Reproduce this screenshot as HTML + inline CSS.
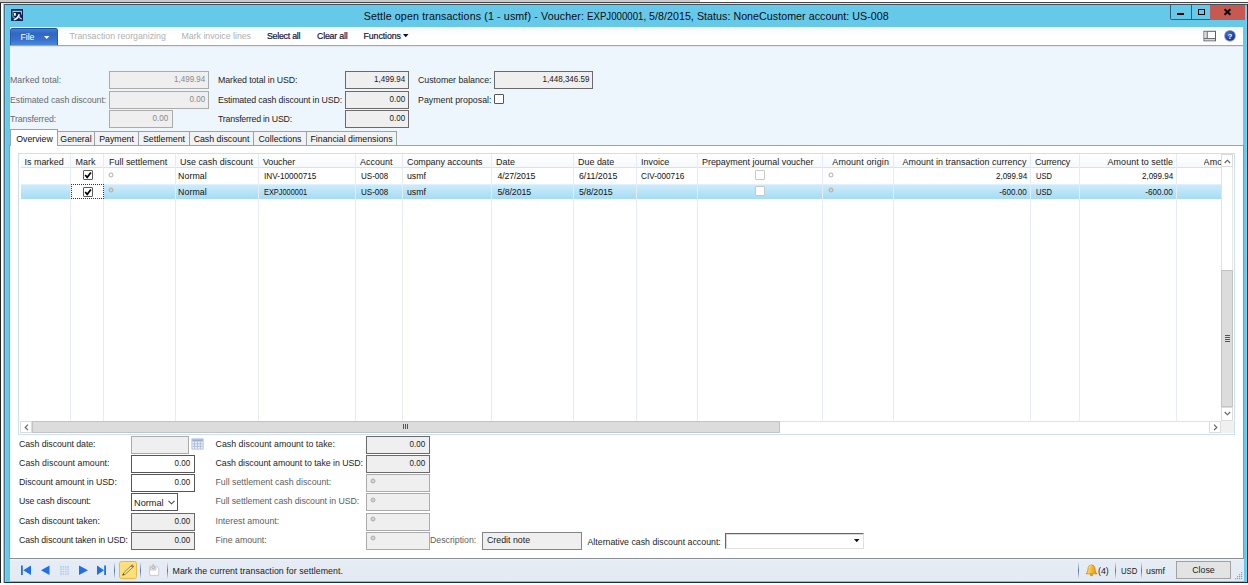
<!DOCTYPE html>
<html><head><meta charset="utf-8"><title>Settle open transactions</title>
<style>
*{box-sizing:border-box;margin:0;padding:0}
html,body{width:1248px;height:585px;overflow:hidden;background:#fff}
body{position:relative;font-family:"Liberation Sans",sans-serif;font-size:8.8px;color:#1a1a1a;line-height:1}
.a{position:absolute}
.t{position:absolute;white-space:nowrap;line-height:10px;height:10px}
.lbl{color:#1e1e1e}
.dis{color:#666b72}
.dis2{color:#5e5e5e}
.f{position:absolute;border:1px solid #6a6a6a;background:#efefef;height:18px;text-align:right;padding-right:3px;line-height:15px;white-space:nowrap}
.n{display:inline-block;transform:scaleX(.91);transform-origin:right center}
.f.l{border-color:#ababab;color:#8a8a8a}
.f.w{background:#fff;border-color:#555}
.tab{position:absolute;top:131px;height:14px;border:1px solid #9da1a8;border-bottom:none;background:#f1f2f4;line-height:14px;text-align:center;white-space:nowrap;color:#111}
.h{font-size:8.950px;position:absolute;top:154.5px;height:14px;line-height:14px;white-space:nowrap;color:#1a1a1a}
.c{position:absolute;white-space:nowrap;line-height:16px;height:16px;color:#111;margin-top:-0.5px}
.vs{position:absolute;top:154px;width:1px;height:266.500px;background:#e5ecf7}
.cb{position:absolute;width:10px;height:10px;border-radius:1px;border:1px solid #5a5a5a;background:#fff}
.dot{position:absolute;width:4.500px;height:4.500px;border-radius:50%;border:1px solid #a9a9a9;background:#d9d9d9}
.sep{position:absolute;top:562px;width:1.600px;margin-left:-0.300px;height:17px;background:linear-gradient(rgba(60,95,150,0),rgba(52,88,145,.8) 50%,rgba(60,95,150,0));border-radius:1px}
</style></head><body>
<!-- desktop scraps behind the window -->
<div class="a" style="left:0;top:0;width:700px;height:2px;background:#cbcbcb"></div>
<div class="a" style="left:0;top:2px;width:1248px;height:1px;background:#454545"></div>
<div class="a" style="left:1px;top:3px;width:1247px;height:1px;background:#e9e9e9"></div>
<div class="a" style="left:0;top:3px;width:1px;height:580px;background:#222"></div>
<div class="a" style="left:3px;top:4px;width:1px;height:579px;background:#c4c0c2"></div>
<!-- window frame -->
<div class="a" style="left:4px;top:4px;width:1244px;height:579px;background:#66c9ea;border-left:1px solid #3f7288;border-top:1px solid #3f5058;border-bottom:1px solid #12303c;border-right:1px solid #152830"></div>
<div class="a" style="left:5px;top:5px;width:1px;height:577px;background:#6fd6fa"></div>
<div class="a" style="left:1246px;top:5px;width:1px;height:577px;background:#6fd6fa"></div>
<!-- app icon -->
<svg class="a" style="left:11px;top:9px" width="12" height="12" viewBox="0 0 12 12"><rect width="12" height="12" fill="#0b2558"/><path d="M1.500 2.300h9.400" stroke="#fff" stroke-width="0.900"/><path d="M1.900 2.500v6M1.900 8.600h2" stroke="#9aa9c9" stroke-width="0.900" fill="none"/><path d="M10.500 2.500v3" stroke="#b4bfd8" stroke-width="0.900"/><rect x="3" y="4" width="1.800" height="2.700" fill="#fff"/><path d="M8.200 5.200C7.600 7.600 5.800 10 2.800 10.800" stroke="#fff" stroke-width="1.600" fill="none"/><path d="M7.500 7C8.200 8.300 9.300 9.600 10.700 10.200" stroke="#d3daea" stroke-width="1.300" fill="none"/></svg>
<div class="t" style="letter-spacing:0.117px;left:363.7px;top:9px;font-size:10.7px;line-height:14px;height:14px;color:#0c0c0c;white-space:pre">Settle open transactions (1 - usmf) - Voucher: </div>
<div class="t" style="transform:scaleX(0.904);transform-origin:left;left:587.2px;top:9px;font-size:10.7px;line-height:14px;height:14px;color:#0c0c0c;white-space:pre">EXPJ000001, </div>
<div class="t" style="letter-spacing:0.034px;left:649.0px;top:9px;font-size:10.7px;line-height:14px;height:14px;color:#0c0c0c;white-space:pre">5/8/2015, Status: NoneCustomer account: US-008</div>
<!-- window buttons -->
<div class="a" style="left:1170px;top:5px;width:22px;height:15.400px;border:1px solid #2f6274;border-top:none;border-radius:0 0 0 2px"></div>
<div class="a" style="left:1191px;top:5px;width:20px;height:15.400px;border:1px solid #2f6274;border-top:none"></div>
<div class="a" style="left:1210px;top:5px;width:34.800px;height:15px;background:#c75a50"></div>
<div class="a" style="left:1177px;top:13px;width:7px;height:2px;background:#000"></div>
<div class="a" style="left:1197.700px;top:9.300px;width:7.300px;height:5.700px;border:1.600px solid #000;border-top-width:1.900px"></div>
<svg class="a" style="left:1223.300px;top:8.300px" width="9" height="8" viewBox="0 0 9 8"><path d="M1.600 1.200l5.800 5.600M7.400 1.200L1.600 6.800" stroke="#000" stroke-width="1.900"/></svg>

<!-- toolbar -->
<div class="a" style="left:9.500px;top:27px;width:1233.500px;height:19px;background:linear-gradient(#f3f7fc,#fff 45%,#fff);border-bottom:1px solid #a3a6aa"></div>
<div class="a" style="left:9.500px;top:28px;width:48.500px;height:17px;background:linear-gradient(#3f7ed8 0,#3067c2 30%,#3871cb 65%,#4988de 100%);border-radius:2.500px 2.500px 0 0;border:1px solid #2b59ad;border-top-color:#264e9e;border-bottom:none"></div>
<div class="t" style="letter-spacing:-0.097px;left:20.600px;top:32px;color:#fff">File</div>
<svg class="a" style="left:43.500px;top:35.500px" width="6" height="4"><path d="M0 0h5.400l-2.700 3z" fill="#fff"/></svg>
<div class="t" style="letter-spacing:-0.008px;left:69.5px;top:31px;color:#b0b0b0">Transaction reorganizing</div>
<div class="t" style="letter-spacing:-0.023px;left:181.5px;top:31px;color:#b0b0b0">Mark invoice lines</div>
<div class="t" style="letter-spacing:-0.250px;left:267px;top:31px;color:#15153a;-webkit-text-stroke:0.2px #15153a">Select all</div>
<div class="t" style="letter-spacing:-0.198px;left:317px;top:31px;color:#15153a;-webkit-text-stroke:0.2px #15153a">Clear all</div>
<div class="t" style="letter-spacing:-0.093px;left:363.5px;top:31px;color:#15153a;-webkit-text-stroke:0.2px #15153a">Functions</div>
<svg class="a" style="left:403px;top:34px" width="6" height="4"><path d="M0 0h5.5l-2.75 3.3z" fill="#111"/></svg>
<!-- toolbar right icons -->
<svg class="a" style="left:1203px;top:30px" width="14" height="12" viewBox="0 0 14 12"><rect x="1" y="1.300" width="11.500" height="9.500" fill="#fff" stroke="#5b5f63" stroke-width="1"/><rect x="1.500" y="1.800" width="2.500" height="6.500" fill="#d9dcdf"/><path d="M4.300 1.500v7M1 8.500h11.500" stroke="#5b5f63" stroke-width="0.900"/><rect x="1.500" y="9" width="10.500" height="1.200" fill="#d5d8db"/></svg>
<svg class="a" style="left:1223px;top:29px" width="14" height="14" viewBox="0 0 14 14"><defs><radialGradient id="hg" cx="0.35" cy="0.3" r="0.8"><stop offset="0" stop-color="#3f6fe0"/><stop offset="1" stop-color="#0b2a9a"/></radialGradient></defs><circle cx="7" cy="6.800" r="5.900" fill="#9a9da3"/><circle cx="7" cy="6.800" r="4.900" fill="url(#hg)"/><text x="7" y="9.700" font-size="8" font-weight="bold" text-anchor="middle" fill="#fff" font-family="Liberation Sans, sans-serif">?</text></svg>

<!-- content background -->
<div class="a" style="left:9.500px;top:46px;width:1233.500px;height:100px;background:linear-gradient(#d9dde3,#eef6fd 1.500px,#eef6fd)"></div>

<!-- top fields -->
<div class="t dis" style="letter-spacing:0.034px;left:10px;top:75px">Marked total:</div>
<div class="t dis" style="letter-spacing:-0.067px;left:10px;top:95px">Estimated cash discount:</div>
<div class="t dis" style="letter-spacing:-0.133px;left:10px;top:114px">Transferred:</div>
<div class="f l" style="left:109px;top:71px;width:100px"><span class="n">1,499.94</span></div>
<div class="f l" style="left:109px;top:91px;width:100px"><span class="n">0.00</span></div>
<div class="f l" style="left:109px;top:110px;width:64px;padding-right:4px"><span class="n">0.00</span></div>
<div class="t lbl" style="letter-spacing:-0.084px;left:218px;top:75px">Marked total in USD:</div>
<div class="t lbl" style="letter-spacing:-0.133px;left:218px;top:95px">Estimated cash discount in USD:</div>
<div class="t lbl" style="letter-spacing:-0.206px;left:218px;top:114px">Transferred in USD:</div>
<div class="f" style="left:345px;top:71px;width:64px"><span class="n">1,499.94</span></div>
<div class="f" style="left:345px;top:91px;width:64px"><span class="n">0.00</span></div>
<div class="f" style="left:345px;top:110px;width:64px"><span class="n">0.00</span></div>
<div class="t lbl" style="letter-spacing:-0.020px;left:418px;top:75px">Customer balance:</div>
<div class="f" style="left:494px;top:71px;width:99px"><span class="n">1,448,346.59</span></div>
<div class="t lbl" style="letter-spacing:0.008px;left:418px;top:95px">Payment proposal:</div>
<div class="cb" style="left:494px;top:94px;border-color:#555"></div>

<!-- tabs -->
<div class="a" style="left:9px;top:145px;width:1235px;height:414px;background:#fff;border:1px solid #9da1a8;border-left-color:#6ba8c4;border-right-color:#6fa0b8;border-bottom:none"></div>
<div class="tab" style="left:57px;width:38px">General</div>
<div class="tab" style="left:94px;width:45px">Payment</div>
<div class="tab" style="left:138px;width:52px">Settlement</div>
<div class="tab" style="left:189px;width:65px">Cash discount</div>
<div class="tab" style="left:253px;width:54px">Collections</div>
<div class="tab" style="left:306px;width:91px">Financial dimensions</div>
<div class="tab" style="left:10px;top:129px;width:48px;height:17px;background:#fff;line-height:18px;padding-left:1px">Overview</div>

<!-- grid -->
<div class="a" style="left:18px;top:153px;width:1217px;height:281.500px;border:1px solid #cddff2;background:#fff"></div>
<div class="a" style="left:21px;top:154px;width:1200px;height:14px;background:linear-gradient(#fff,#f6f9fd);border-bottom:1px solid #d8e2ee"></div>
<div class="a" style="left:21px;top:183.500px;width:1200px;height:15.500px;background:linear-gradient(#cdebfa,#a5dcf5);border-top:1px solid #dff2fc"></div>
<div class="vs" style="left:70px"></div><div class="vs" style="left:103.200px"></div><div class="vs" style="left:175px"></div><div class="vs" style="left:258px"></div><div class="vs" style="left:355px"></div><div class="vs" style="left:402px"></div><div class="vs" style="left:491px"></div><div class="vs" style="left:573px"></div><div class="vs" style="left:636px"></div><div class="vs" style="left:697px"></div><div class="vs" style="left:822px"></div><div class="vs" style="left:893px"></div><div class="vs" style="left:1030px"></div><div class="vs" style="left:1079px"></div><div class="vs" style="left:1176px"></div>
<div class="h" style="left:24.5px">Is marked</div>
<div class="h" style="left:75.5px">Mark</div>
<div class="h" style="left:109px">Full settlement</div>
<div class="h" style="left:180px">Use cash discount</div>
<div class="h" style="letter-spacing:-0.114px;left:263px">Voucher</div>
<div class="h" style="letter-spacing:0.015px;left:360px">Account</div>
<div class="h" style="letter-spacing:-0.063px;left:407px">Company accounts</div>
<div class="h" style="left:496px">Date</div>
<div class="h" style="left:578px">Due date</div>
<div class="h" style="left:641px">Invoice</div>
<div class="h" style="letter-spacing:-0.015px;left:702px">Prepayment journal voucher</div>
<div class="h" style="letter-spacing:0.119px;right:359px">Amount origin</div>
<div class="h" style="letter-spacing:0.023px;right:221.5px">Amount in transaction currency</div>
<div class="h" style="letter-spacing:-0.133px;left:1035px">Currency</div>
<div class="h" style="letter-spacing:0.050px;right:75px">Amount to settle</div>
<div class="h" style="left:1203.500px;width:17px;overflow:hidden;letter-spacing:0.2px">Amount</div>
<!-- row 1 -->
<div class="cb" style="left:83px;top:170.200px"></div>
<svg class="a" style="left:84px;top:171.200px" width="8" height="8" viewBox="0 0 8 8"><path d="M1.200 4l2 2.300L6.900 1.500" stroke="#000" stroke-width="1.700" fill="none"/></svg>
<svg class="a" style="left:107.9px;top:171.5px" width="6" height="6" viewBox="0 0 6 6"><circle cx="3" cy="3" r="2" fill="#fff" stroke="#a6a6a6" stroke-width="0.900"/></svg>
<div class="c" style="letter-spacing:0.073px;left:178px;top:168px">Normal</div>
<div class="c" style="transform:scaleX(0.932);transform-origin:left;left:263.800px;top:168px">INV-10000715</div>
<div class="c" style="transform:scaleX(0.915);transform-origin:left;left:360.600px;top:168px">US-008</div>
<div class="c" style="letter-spacing:-0.020px;left:407px;top:168px">usmf</div>
<div class="c" style="letter-spacing:-0.160px;left:497.5px;top:168px">4/27/2015</div>
<div class="c" style="letter-spacing:-0.020px;left:579px;top:168px">6/11/2015</div>
<div class="c" style="transform:scaleX(0.932);transform-origin:left;left:641px;top:168px">CIV-000716</div>
<div class="cb" style="left:755px;top:170px;border-color:#c8c8c8"></div>
<svg class="a" style="left:827.5px;top:171.5px" width="6" height="6" viewBox="0 0 6 6"><circle cx="3" cy="3" r="2" fill="#fff" stroke="#a6a6a6" stroke-width="0.900"/></svg>
<div class="c" style="transform:scaleX(0.914);transform-origin:right;right:221px;top:168px">2,099.94</div>
<div class="c" style="transform:scaleX(0.861);transform-origin:left;left:1036px;top:168px">USD</div>
<div class="c" style="transform:scaleX(0.914);transform-origin:right;right:75px;top:168px">2,099.94</div>
<!-- row 2 -->
<div class="a" style="left:71px;top:184px;width:33px;height:15px;background:#fff;border:1px dotted #333"></div>
<div class="cb" style="left:83px;top:186.600px"></div>
<svg class="a" style="left:84px;top:187.600px" width="8" height="8" viewBox="0 0 8 8"><path d="M1.200 4l2 2.300L6.900 1.500" stroke="#000" stroke-width="1.700" fill="none"/></svg>
<svg class="a" style="left:107.9px;top:187.1px" width="6" height="6" viewBox="0 0 6 6"><circle cx="3" cy="3" r="2" fill="#d4d4d4" stroke="#a6a6a6" stroke-width="0.900"/></svg>
<div class="c" style="letter-spacing:0.073px;left:178px;top:184px">Normal</div>
<div class="c" style="transform:scaleX(0.841);transform-origin:left;left:263.800px;top:184px">EXPJ000001</div>
<div class="c" style="transform:scaleX(0.915);transform-origin:left;left:360.600px;top:184px">US-008</div>
<div class="c" style="letter-spacing:-0.020px;left:407px;top:184px">usmf</div>
<div class="c" style="letter-spacing:-0.081px;left:497.5px;top:184px">5/8/2015</div>
<div class="c" style="letter-spacing:-0.081px;left:579px;top:184px">5/8/2015</div>
<div class="cb" style="left:755px;top:186px;border-color:#c8c8c8"></div>
<svg class="a" style="left:827.5px;top:187.1px" width="6" height="6" viewBox="0 0 6 6"><circle cx="3" cy="3" r="2" fill="#d4d4d4" stroke="#a6a6a6" stroke-width="0.900"/></svg>
<div class="c" style="transform:scaleX(0.921);transform-origin:right;right:221px;top:184px">-600.00</div>
<div class="c" style="transform:scaleX(0.861);transform-origin:left;left:1036px;top:184px">USD</div>
<div class="c" style="transform:scaleX(0.921);transform-origin:right;right:75px;top:184px">-600.00</div>
<!-- vertical scrollbar -->
<div class="a" style="left:1220.500px;top:154px;width:12.500px;height:267px;background:#fff;border-left:1px solid #e3e3e3;border-right:1px solid #e6e6e6"></div>
<div class="a" style="left:1220.500px;top:154px;width:12.500px;height:13px;border:1px solid #dcdcdc;background:#fff"></div>
<svg class="a" style="left:1223.600px;top:158.600px" width="7" height="5"><path d="M0.700 4l2.700-2.800 2.700 2.800" stroke="#5a5a5a" stroke-width="1.100" fill="none"/></svg>
<div class="a" style="left:1220.500px;top:270px;width:12.500px;height:137px;background:#dcdcdc;border:1px solid #c3c3c3"></div>
<div class="a" style="left:1225px;top:335px;width:5px;height:1px;background:#555;box-shadow:0 2px #555,0 4px #555,0 6px #555"></div>
<div class="a" style="left:1220.500px;top:407px;width:12.500px;height:13.500px;border:1px solid #dcdcdc;background:#fff"></div>
<svg class="a" style="left:1223.600px;top:411px" width="7" height="5"><path d="M0.700 1l2.700 2.800 2.700-2.800" stroke="#5a5a5a" stroke-width="1.100" fill="none"/></svg>
<!-- horizontal scrollbar -->
<div class="a" style="left:20px;top:420.500px;width:1213px;height:12px;background:#fff;border-top:1px solid #e3e3e3"></div>
<div class="a" style="left:20px;top:420.500px;width:12px;height:12px;border:1px solid #dcdcdc;background:#fff"></div>
<svg class="a" style="left:24px;top:423.500px" width="5" height="7"><path d="M4 0.700l-2.800 2.700 2.800 2.700" stroke="#5a5a5a" stroke-width="1.100" fill="none"/></svg>
<div class="a" style="left:32px;top:420.500px;width:748px;height:12px;background:#dcdcdc;border:1px solid #c3c3c3"></div>
<div class="a" style="left:403px;top:424px;width:1px;height:5px;background:#555;box-shadow:2px 0 #555,4px 0 #555"></div>
<div class="a" style="left:1209px;top:420.500px;width:12px;height:12px;border:1px solid #dcdcdc;background:#fff"></div>
<svg class="a" style="left:1213px;top:423.500px" width="5" height="7"><path d="M1 0.700l2.800 2.700-2.800 2.700" stroke="#5a5a5a" stroke-width="1.100" fill="none"/></svg>
<div class="a" style="left:1221px;top:420.500px;width:12.500px;height:12.500px;background:#f0f0f0"></div>

<!-- bottom fields col 1 -->
<div class="t lbl" style="letter-spacing:-0.067px;left:19px;top:439.3px">Cash discount date:</div>
<div class="t lbl" style="letter-spacing:0.025px;left:19px;top:458.3px">Cash discount amount:</div>
<div class="t lbl" style="letter-spacing:-0.042px;left:19px;top:477.3px">Discount amount in USD:</div>
<div class="t lbl" style="letter-spacing:-0.140px;left:19px;top:496.3px">Use cash discount:</div>
<div class="t lbl" style="letter-spacing:-0.068px;left:19px;top:516.3px">Cash discount taken:</div>
<div class="t lbl" style="letter-spacing:-0.136px;left:19px;top:535.3px">Cash discount taken in USD:</div>
<div class="f l" style="left:131px;top:436px;width:58px"></div>
<svg class="a" style="left:191px;top:438px" width="13" height="12" viewBox="0 0 13 12"><rect x="0.900" y="0.900" width="11.200" height="10.200" fill="#eef2fa" stroke="#a3b3d8" stroke-width="0.800"/><rect x="1.300" y="1.300" width="10.400" height="2.200" fill="#9aaedb"/><path d="M3.600 3.500v7.400M6.500 3.500v7.400M9.400 3.500v7.400M1.300 5.800h10.400M1.300 8.300h10.400" stroke="#a9b9df" stroke-width="0.900"/></svg>
<div class="f w" style="left:131px;top:455px;width:64px;padding-right:4.300px"><span class="n">0.00</span></div>
<div class="f w" style="left:131px;top:474px;width:64px;padding-right:4.300px"><span class="n">0.00</span></div>
<div class="f w" style="left:131px;top:493px;width:47px;text-align:left;padding-left:2px;font-size:9.2px;letter-spacing:0;line-height:19px">Normal</div>
<svg class="a" style="left:168px;top:500px" width="7" height="5"><path d="M0.500 0.800l3 3 3-3" stroke="#444" stroke-width="1.050" fill="none"/></svg>
<div class="f" style="left:131px;top:513px;width:64px;padding-right:4.300px"><span class="n">0.00</span></div>
<div class="f" style="left:131px;top:532px;width:64px;padding-right:4.300px"><span class="n">0.00</span></div>
<!-- bottom fields col 2 -->
<div class="t lbl" style="letter-spacing:0.023px;left:215.5px;top:439.3px">Cash discount amount to take:</div>
<div class="t lbl" style="letter-spacing:-0.046px;left:215.5px;top:458.3px">Cash discount amount to take in USD:</div>
<div class="t dis2" style="letter-spacing:-0.006px;left:215.5px;top:477.3px">Full settlement cash discount:</div>
<div class="t dis2" style="letter-spacing:-0.068px;left:215.5px;top:496.3px">Full settlement cash discount in USD:</div>
<div class="t dis2" style="letter-spacing:0.008px;left:215.5px;top:516.3px">Interest amount:</div>
<div class="t dis2" style="letter-spacing:-0.012px;left:215.5px;top:535.3px">Fine amount:</div>
<div class="f" style="left:366px;top:436px;width:64px;padding-right:3.700px"><span class="n">0.00</span></div>
<div class="f" style="left:366px;top:455px;width:64px;padding-right:3.700px"><span class="n">0.00</span></div>
<div class="f l" style="left:366px;top:474px;width:64px"></div><svg class="a" style="left:369.5px;top:477.5px" width="6" height="6" viewBox="0 0 6 6"><circle cx="3" cy="3" r="2" fill="#d4d4d4" stroke="#a6a6a6" stroke-width="0.900"/></svg>
<div class="f l" style="left:366px;top:493px;width:64px"></div><svg class="a" style="left:369.5px;top:496.5px" width="6" height="6" viewBox="0 0 6 6"><circle cx="3" cy="3" r="2" fill="#d4d4d4" stroke="#a6a6a6" stroke-width="0.900"/></svg>
<div class="f l" style="left:366px;top:513px;width:64px"></div><svg class="a" style="left:369.5px;top:515.5px" width="6" height="6" viewBox="0 0 6 6"><circle cx="3" cy="3" r="2" fill="#d4d4d4" stroke="#a6a6a6" stroke-width="0.900"/></svg>
<div class="f l" style="left:366px;top:532px;width:64px"></div><svg class="a" style="left:369.5px;top:534.5px" width="6" height="6" viewBox="0 0 6 6"><circle cx="3" cy="3" r="2" fill="#d4d4d4" stroke="#a6a6a6" stroke-width="0.900"/></svg>
<div class="t dis2" style="letter-spacing:-0.021px;left:430px;top:535.3px">Description:</div>
<div class="f" style="left:482px;top:532px;width:100px;text-align:left;padding-left:4px;letter-spacing:0;border-color:#858585">Credit note</div>
<div class="t lbl" style="letter-spacing:-0.006px;left:587.5px;top:536.5px">Alternative cash discount account:</div>
<div class="a" style="left:725px;top:533px;width:139px;height:16px;background:#fff;border-top:1px solid #666;border-left:1px solid #666;border-right:1px solid #e1e1e1;border-bottom:1px solid #e1e1e1;box-shadow:inset 1px 1px 0 #d9d9d9"></div>
<svg class="a" style="left:854px;top:539px" width="6" height="4"><path d="M0 0h5.5l-2.75 3.3z" fill="#111"/></svg>

<!-- status bar -->
<div class="a" style="left:9.500px;top:558px;width:1234px;height:23px;background:linear-gradient(#f2f5f9,#e6ecf4 2px,#e3eaf3);border-top:1px solid #8a8f96"></div>
<svg class="a" style="left:20px;top:565px" width="90" height="11" viewBox="0 0 90 11">
<g fill="#1e6df2"><rect x="1" y="0.5" width="1.8" height="9.5"/><path d="M11 0.5v9.5L3.3 5.25z"/><path d="M29.5 0.5v9.5L21 5.25z"/><path d="M59 0.5v9.5L68 5.25z"/><path d="M77 0.5v9.5L84 5.25z"/><rect x="84.2" y="0.5" width="1.8" height="9.5"/></g>
<g fill="#b7cdf3"><rect x="40" y="1" width="9" height="9"/></g><path d="M40 3.2h9M40 5.5h9M40 7.8h9M42.3 1v9M44.6 1v9M46.9 1v9" stroke="#e4ebf3" stroke-width="0.8"/>
</svg>
<div class="sep" style="left:114px"></div>
<div class="a" style="left:119px;top:561px;width:18px;height:18px;background:#ffe07c;border:1px solid #efb640;border-radius:2.500px"></div>
<svg class="a" style="left:121px;top:563px" width="14" height="14" viewBox="0 0 14 14"><path d="M1.600 12.300l1.300-2.700 7.600-7.200 1.600 1.600-7.700 7.200z" fill="#fbe88a" stroke="#6b5a2a" stroke-width="0.700"/><path d="M10.300 2.600l.9-.8 1.600 1.600-.9.800z" fill="#e0607a" stroke="#8a4a55" stroke-width="0.500"/><path d="M9.700 3.200l.6-.6 1.600 1.600-.6.600z" fill="#5aa77a"/><path d="M1.600 12.300l.9-1.900 1.100 1.100z" fill="#3a3226"/></svg>
<div class="sep" style="left:140px"></div>
<svg class="a" style="left:149px;top:564px" width="11" height="12" viewBox="0 0 11 12"><path d="M0.700 2.300h7l2 2v7H0.700z" fill="#fff" stroke="#c6c6c6" stroke-width="0.900"/><path d="M1.500 2.500v3.500h5.500v-3.500" fill="#ececec" stroke="#c0c0c0" stroke-width="0.800"/><circle cx="4.300" cy="3.300" r="1.500" fill="#dcdcdc" stroke="#a5a5a5" stroke-width="0.800"/><path d="M3.200 1.200a1.200 1.200 0 0 1 2.200 0" stroke="#b5b5b5" stroke-width="0.700" fill="none"/></svg>
<div class="sep" style="left:167px"></div>
<div class="t" style="letter-spacing:0.064px;left:172.5px;top:566px;color:#1a1a1a">Mark the current transaction for settlement.</div>
<div class="sep" style="left:1078px"></div>
<svg class="a" style="left:1085px;top:564px" width="13" height="13" viewBox="0 0 13 13"><defs><linearGradient id="bg" x1="0" x2="1"><stop offset="0" stop-color="#ffe58a"/><stop offset="0.45" stop-color="#f8bd2e"/><stop offset="1" stop-color="#e89412"/></linearGradient></defs><path d="M6.5 1c-2.4 0-3.6 2-3.6 4.2 0 2.4-.8 3.6-1.9 4.6h11c-1.1-1-1.9-2.2-1.9-4.6C10.100 3 8.900 1 6.500 1z" fill="url(#bg)" stroke="#b8801a" stroke-width="0.7"/><ellipse cx="6.500" cy="11" rx="1.6" ry="1.200" fill="#d99a1e"/><path d="M4.200 3.500c.5-1 1.300-1.600 2.300-1.600" stroke="#fff3c0" stroke-width="1" fill="none"/></svg>
<div class="t" style="left:1098px;top:566px">(4)</div>
<div class="sep" style="left:1115px"></div>
<div class="t" style="left:1120.500px;top:566px;transform:scaleX(0.880);transform-origin:left">USD</div>
<div class="sep" style="left:1141px"></div>
<div class="t" style="left:1146px;top:566px">usmf</div>
<div class="a" style="left:1176px;top:561px;width:55px;height:18px;background:#e3e3e3;border:1px solid #a2a2a2;text-align:center;line-height:16px">Close</div>
<svg class="a" style="left:1234px;top:571px" width="9" height="9" viewBox="0 0 9 9"><g fill="#9aa0aa"><rect x="7" y="1" width="1.200" height="1.200"/><rect x="7" y="3" width="1.200" height="1.200"/><rect x="5" y="3" width="1.200" height="1.200"/><rect x="7" y="5" width="1.200" height="1.200"/><rect x="5" y="5" width="1.200" height="1.200"/><rect x="3" y="5" width="1.200" height="1.200"/><rect x="7" y="7" width="1.200" height="1.200"/><rect x="5" y="7" width="1.200" height="1.200"/><rect x="3" y="7" width="1.200" height="1.200"/><rect x="1" y="7" width="1.200" height="1.200"/></g></svg>
</body></html>
